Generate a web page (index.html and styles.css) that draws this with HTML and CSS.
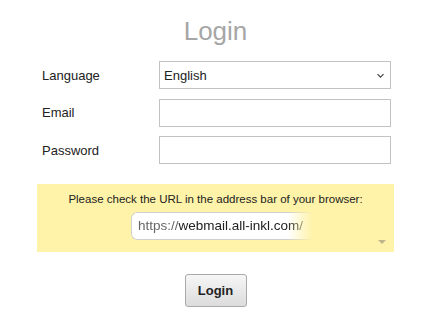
FILE: index.html
```html
<!DOCTYPE html>
<html>
<head>
<meta charset="utf-8">
<link rel="stylesheet" href="styles.css">
</head>
<body>
<div class="page">
  <h1 class="title">Login</h1>
  <form class="form">
    <div class="row">
      <label class="label">Language</label>
      <div class="select-wrap">
        <select class="field select">
          <option>English</option>
        </select>
        <svg class="chevron" width="9" height="6" viewBox="0 0 9 6"><path d="M1.5 1.2 L4.5 4.2 L7.5 1.2" fill="none" stroke="#444" stroke-width="1.2"/></svg>
      </div>
    </div>
    <div class="row">
      <label class="label">Email</label>
      <input class="field" type="text">
    </div>
    <div class="row">
      <label class="label">Password</label>
      <input class="field" type="password">
    </div>
    <div class="notice">
      <p class="notice-text">Please check the URL in the address bar of your browser:</p>
      <div class="url"><span class="proto">https://</span><span class="host">webmail.all-inkl.com/</span></div>
      <span class="tri"></span>
    </div>
    <div class="actions">
      <button class="btn" type="button">Login</button>
    </div>
  </form>
</div>
</body>
</html>
```
FILE: styles.css
```css
html, body {
  margin: 0;
  padding: 0;
  background: #fff;
  font-family: "Liberation Sans", Arial, sans-serif;
}
.page {
  width: 357px;
  margin-left: 37px;
}
.title {
  margin: 0;
  height: 61px;
  box-sizing: border-box;
  padding-top: 16px;
  font-size: 26px;
  font-weight: normal;
  color: #a6a6a6;
  text-align: center;
  line-height: 30px;
}
.form {
  display: flex;
  flex-direction: column;
  margin: 0;
}
.row {
  display: grid;
  grid-template-columns: 122px 232px;
  align-items: center;
  margin-bottom: 9.5px;
}
.label {
  padding-left: 5px;
  font-size: 13px;
  color: #222;
}
.field {
  box-sizing: border-box;
  width: 232px;
  height: 28px;
  margin: 0;
  border: 1px solid #c3c3c3;
  border-radius: 0;
  background: #fff;
  font-family: "Liberation Sans", Arial, sans-serif;
  font-size: 13px;
  color: #222;
  padding: 0 4px;
  outline: none;
}
.select-wrap {
  position: relative;
  width: 232px;
}
.select {
  -webkit-appearance: none;
  appearance: none;
  display: block;
}
.chevron {
  position: absolute;
  right: 6px;
  top: 12px;
}
.notice {
  position: relative;
  margin-top: 10.5px;
  background: #fef3a8;
  height: 68px;
  box-sizing: border-box;
  padding-top: 8px;
  display: flex;
  flex-direction: column;
  align-items: center;
}
.notice-text {
  margin: 0;
  font-size: 11.5px;
  line-height: 14px;
  color: #222;
}
.url {
  margin-top: 6px;
  margin-left: 13px;
  box-sizing: border-box;
  width: 182px;
  height: 28px;
  line-height: 26px;
  padding-left: 6px;
  border: 1px solid #cfcfcf;
  border-right: none;
  border-radius: 6px 0 0 6px;
  background: #fff;
  font-size: 13.5px;
  white-space: nowrap;
  -webkit-mask-image: linear-gradient(to right, #000 86%, transparent 100%);
  mask-image: linear-gradient(to right, #000 86%, transparent 100%);
}
.proto {
  color: #666;
}
.host {
  color: #222;
}
.tri {
  position: absolute;
  right: 8px;
  bottom: 8px;
  width: 0;
  height: 0;
  border-left: 4px solid transparent;
  border-right: 4px solid transparent;
  border-top: 4px solid #bdb48a;
}
.actions {
  display: flex;
  justify-content: center;
  margin-top: 22px;
}
.btn {
  width: 62px;
  height: 33px;
  border: 1px solid #a9a9a9;
  border-radius: 3px;
  background: linear-gradient(#f6f6f6, #dcdcdc);
  font-family: "Liberation Sans", Arial, sans-serif;
  font-size: 13px;
  font-weight: bold;
  color: #222;
  padding: 0;
}
```
